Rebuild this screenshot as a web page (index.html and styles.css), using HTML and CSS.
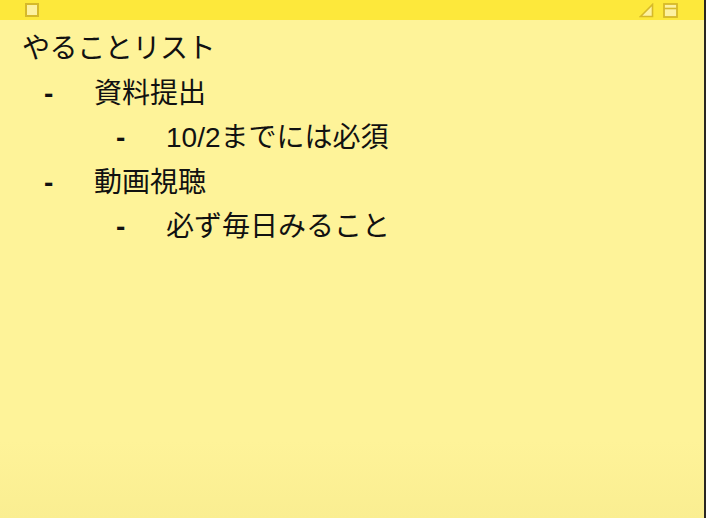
FILE: index.html
```html
<!DOCTYPE html>
<html lang="ja">
<head>
<meta charset="utf-8">
<title>やることリスト</title>
<link rel="stylesheet" href="styles.css">
</head>
<body>
<div class="note">
  <div class="titlebar">
    <span class="close-box"></span>
    <span class="spacer"></span>
    <svg class="icon" width="15" height="15" viewBox="0 0 15 15">
      <path d="M1.5 13.5 L13.5 1.5 L13.5 13.5 Z" fill="#fdf1a0" stroke="#d6b92a" stroke-width="1.6" stroke-linejoin="miter"/>
    </svg>
    <svg class="icon win" width="15" height="15" viewBox="0 0 15 15">
      <rect x="1" y="1" width="13" height="13" fill="#fdf1a0" stroke="#d6b92a" stroke-width="1.8"/>
      <line x1="1" y1="5.5" x2="14" y2="5.5" stroke="#d6b92a" stroke-width="1.6"/>
    </svg>
  </div>
  <div class="content">
    <div class="line title">やることリスト</div>
    <div class="line lv1"><span class="dash">-</span><span>資料提出</span></div>
    <div class="line lv2"><span class="dash">-</span><span>10/2までには必須</span></div>
    <div class="line lv1"><span class="dash">-</span><span>動画視聴</span></div>
    <div class="line lv2"><span class="dash">-</span><span>必ず毎日みること</span></div>
  </div>
</div>
</body>
</html>
```

FILE: styles.css
```css
html, body {
  margin: 0;
  padding: 0;
  background: #262420;
}
.note {
  width: 704px;
  height: 518px;
  display: flex;
  flex-direction: column;
  background: linear-gradient(to bottom, #fef399 0%, #fef399 85%, #faee91 100%);
  border-right: 2px solid #2a2723;
}
.titlebar {
  height: 20px;
  flex: none;
  background: #fde83b;
  display: flex;
  align-items: center;
  padding: 0 26px 0 25px;
  box-sizing: border-box;
}
.close-box {
  width: 14px;
  height: 14px;
  box-sizing: border-box;
  border: 2px solid #d6b92a;
  background: #fdf1a0;
}
.spacer {
  flex: 1;
}
.icon {
  display: block;
}
.icon.win {
  margin-left: 9px;
}
.content {
  padding: 7px 0 0 22px;
  font-family: "Liberation Sans", "Noto Sans CJK JP", sans-serif;
  font-size: 28px;
  line-height: 44.5px;
  color: #111;
}
.line {
  display: flex;
  white-space: nowrap;
}
.title {
  letter-spacing: -0.4px;
}
.dash {
  width: 50px;
  flex: none;
  font-weight: bold;
}
.lv1 {
  margin-left: 22px;
}
.lv2 {
  margin-left: 94px;
}
```
